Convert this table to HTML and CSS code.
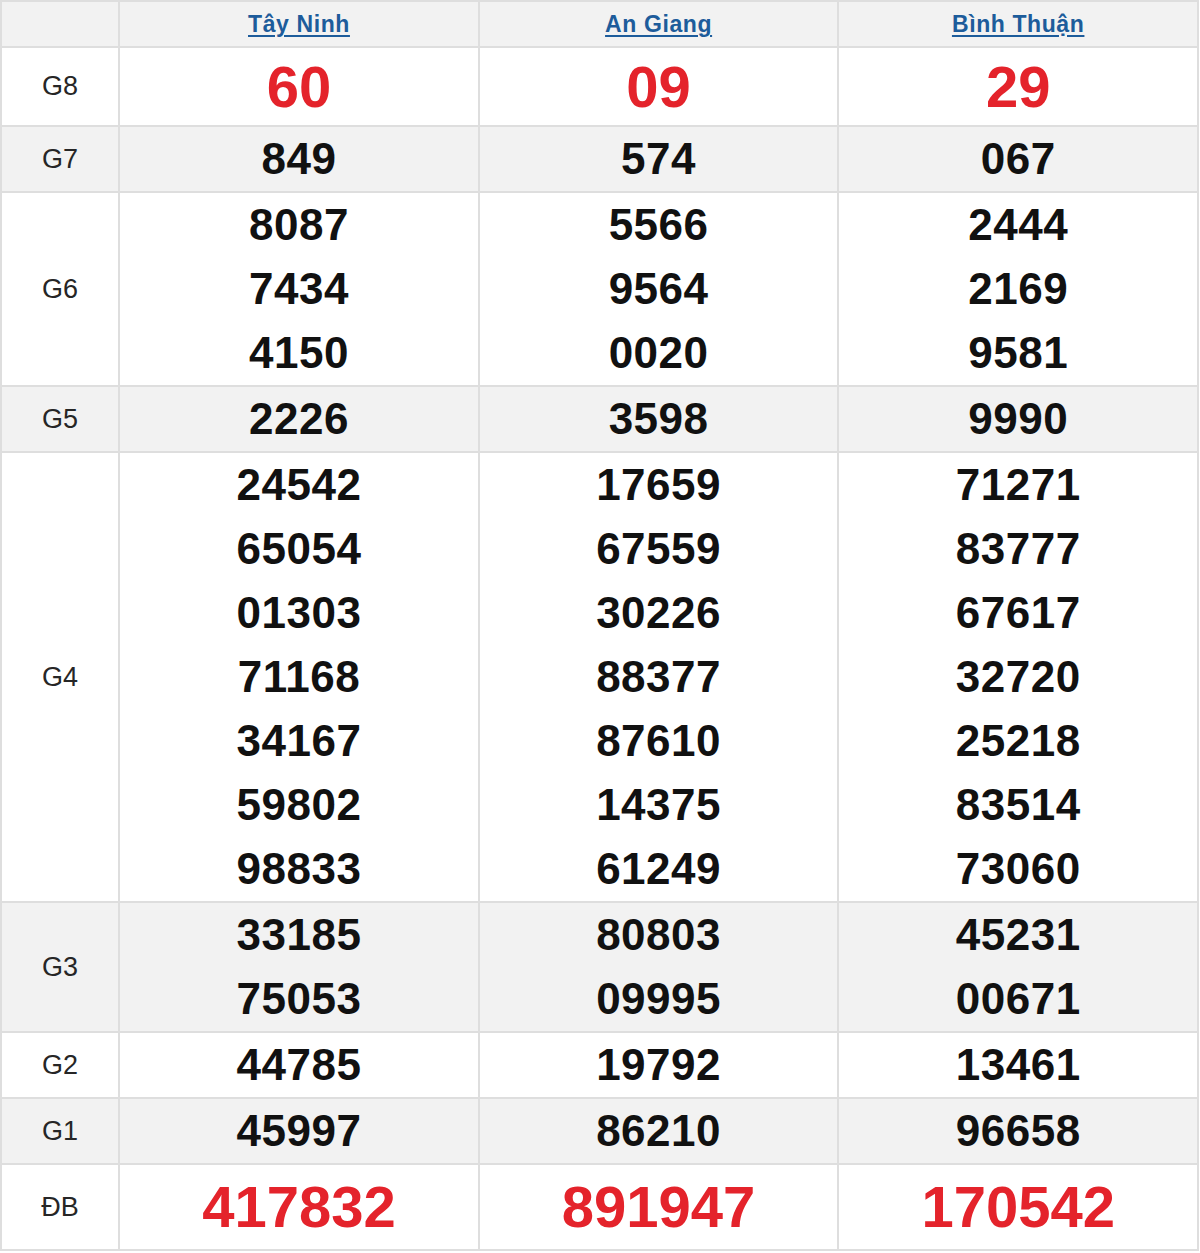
FILE: index.html
```html
<!DOCTYPE html>
<html lang="vi">
<head>
<meta charset="utf-8">
<title>Kết quả xổ số</title>
<link rel="stylesheet" href="styles.css">
</head>
<body>
<table class="kq">
  <colgroup>
    <col class="c-label"><col class="c-prov"><col class="c-prov"><col class="c-prov">
  </colgroup>
  <thead>
    <tr class="row-head">
      <th></th>
      <th><a href="#" class="prov">Tây Ninh</a></th>
      <th><a href="#" class="prov">An Giang</a></th>
      <th><a href="#" class="prov">Bình Thuận</a></th>
    </tr>
  </thead>
  <tbody>
    <tr class="row-g8">
      <td class="label">G8</td>
      <td class="num big">60</td><td class="num big">09</td><td class="num big">29</td>
    </tr>
    <tr class="alt">
      <td class="label">G7</td>
      <td class="num">849</td><td class="num">574</td><td class="num">067</td>
    </tr>
    <tr>
      <td class="label">G6</td>
      <td class="num">8087<br>7434<br>4150</td>
      <td class="num">5566<br>9564<br>0020</td>
      <td class="num">2444<br>2169<br>9581</td>
    </tr>
    <tr class="alt">
      <td class="label">G5</td>
      <td class="num">2226</td><td class="num">3598</td><td class="num">9990</td>
    </tr>
    <tr>
      <td class="label">G4</td>
      <td class="num">24542<br>65054<br>01303<br>71168<br>34167<br>59802<br>98833</td>
      <td class="num">17659<br>67559<br>30226<br>88377<br>87610<br>14375<br>61249</td>
      <td class="num">71271<br>83777<br>67617<br>32720<br>25218<br>83514<br>73060</td>
    </tr>
    <tr class="alt">
      <td class="label">G3</td>
      <td class="num">33185<br>75053</td>
      <td class="num">80803<br>09995</td>
      <td class="num">45231<br>00671</td>
    </tr>
    <tr>
      <td class="label">G2</td>
      <td class="num">44785</td><td class="num">19792</td><td class="num">13461</td>
    </tr>
    <tr class="alt">
      <td class="label">G1</td>
      <td class="num">45997</td><td class="num">86210</td><td class="num">96658</td>
    </tr>
    <tr class="row-db">
      <td class="label">ĐB</td>
      <td class="num big">417832</td><td class="num big">891947</td><td class="num big">170542</td>
    </tr>
  </tbody>
</table>
</body>
</html>
```

FILE: styles.css
```css
html, body {
  margin: 0;
  padding: 0;
  background: #ffffff;
}

body {
  font-family: "Liberation Sans", Arial, sans-serif;
  color: #111111;
}

.kq {
  width: 1199px;
  border-collapse: collapse;
  table-layout: fixed;
  border: 2px solid #dedede;
}

.c-label { width: 118px; }
.c-prov { width: 359px; }

.kq th,
.kq td {
  border: 2px solid #dedede;
  padding: 0;
  text-align: center;
  vertical-align: middle;
}

.row-head th {
  background: #f2f2f2;
  height: 44px;
  font-size: 23px;
  line-height: 44px;
  font-weight: bold;
}

.prov {
  color: #1d5c9b;
  font-size: 23px;
  font-weight: bold;
  letter-spacing: 0.6px;
  line-height: 44px;
  text-decoration: underline;
  text-underline-offset: 3px;
  text-decoration-thickness: 2px;
}

.alt td {
  background: #f2f2f2;
}

.label {
  font-size: 27px;
  color: #262626;
  font-weight: normal;
}

.num {
  font-size: 44px;
  font-weight: bold;
  line-height: 64px;
  color: #111111;
  letter-spacing: 0.5px;
}

.num.big {
  color: #e4232b;
  font-size: 58px;
  letter-spacing: 0;
}

.row-g8 td {
  height: 77px;
}

.row-g8 .num.big {
  line-height: 77px;
}

.row-db .num.big {
  line-height: 84px;
}
```
